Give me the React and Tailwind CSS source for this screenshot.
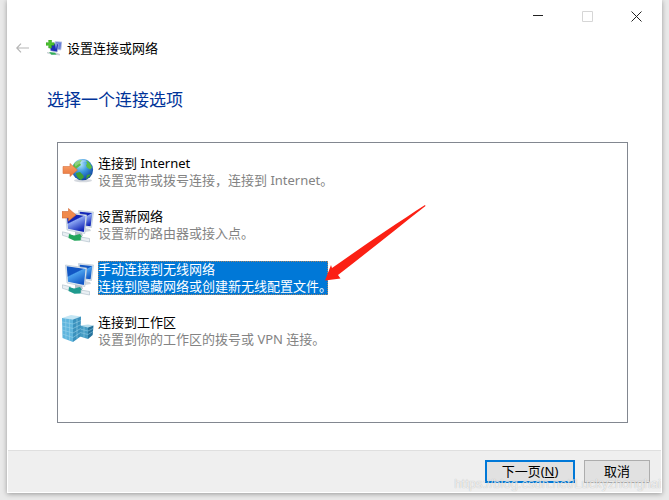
import React, { useState } from "react";

const GlobeIcon = () => (
  <svg viewBox="0 2 32 32" className="w-8 h-8 shrink-0" aria-hidden="true">
    <defs>
      <radialGradient id="sea" cx="0.4" cy="0.25" r="0.8">
        <stop offset="0" stopColor="#b5e6fa" />
        <stop offset="0.45" stopColor="#3b98de" />
        <stop offset="1" stopColor="#0c3796" />
      </radialGradient>
      <linearGradient id="globeArrow" x1="0" y1="0" x2="0" y2="1">
        <stop offset="0" stopColor="#f9a46c" />
        <stop offset="1" stopColor="#e9733a" />
      </linearGradient>
    </defs>
    <ellipse cx="21" cy="26.500" rx="9" ry="1.800" fill="#d5d9df" />
    <circle cx="20.500" cy="15.700" r="10.600" fill="url(#sea)" />
    <path d="M12 10c2-3 5-4 8-4l-2 3 1 2-4 3-3 3-1-1c0-2 0-4 1-6z" fill="#5bbd47" />
    <path d="M14 19l4-1 3 3 1 2-3 3c-3-1-5-4-5-7z" fill="#3fa035" />
    <path d="M24 6.500c3 1 5 4 6 7l-2 2-3-2-1-2 1-2z" fill="#5bbd47" />
    <path d="M25 21l4-1c-1 2-3 4-5 5z" fill="#3fa035" />
    <path d="M12.500 9.500c3-5 10-5 13-2-4 0-9 2-12 5z" fill="#fff" opacity="0.3" />
    <path d="M1 12.500h7V9.500L15.500 16 8 22.500V19.500H1z" fill="url(#globeArrow)" stroke="#d8713c" strokeWidth="0.6" />
  </svg>
);

const ScreensIcon = ({ id, top, bottom, cable, arrow }) => (
  <svg viewBox="0 0 32 36" className="w-8 h-9 shrink-0" aria-hidden="true">
    <defs>
      <linearGradient id={id} x1="0.1" y1="0" x2="0.6" y2="1">
        <stop offset="0" stopColor={bottom} />
        <stop offset="0.4" stopColor={bottom} />
        <stop offset="0.45" stopColor={top} />
        <stop offset="1" stopColor={bottom} />
      </linearGradient>
    </defs>
    <path d="M23 21l5 1 1 2-6 1z" fill="#cfd6dd" />
    <path d="M16.500 3.500L31.500 5 29.500 20.500 18 19z" fill="#dbe5ee" stroke="#b4c3d0" strokeWidth="0.6" />
    <path d="M17.700 4.700L30.300 6 28.600 19.300 18 18z" fill={`url(#${id})`} />
    <path d="M13 24l7 2 1 3-8-1z" fill="#b6c0ca" />
    <path d="M3.500 5l21.300 3-2 18.500L5 23z" fill="#e4ebf2" stroke="#b0bfcd" strokeWidth="0.6" />
    <path d="M4.700 6.300l18.900 2.700-1.700 16L6 21.800z" fill={`url(#${id})`} />
    <path d="M.5 24.800l8 2v4l-8-2.500z" fill="#e9eff3" stroke="#a9bac6" strokeWidth="0.6" />
    <path d="M7 27l5 1.500 6-1.500 2.500 3.500-2 3-6 .2-6-2.700z" fill={cable} />
    <path d="M19 30l8.500 1.500v3.500l-8.500-1.700z" fill="#e9eff3" stroke="#a9bac6" strokeWidth="0.6" />
    {arrow && (
      <path d="M0 4.500h6.500V1.500L14 8 6.500 14V11H0z" fill="#f08a4c" stroke="#d06a35" strokeWidth="0.6" />
    )}
  </svg>
);

const ServersIcon = () => (
  <svg viewBox="0 0 32 32" className="w-8 h-8 shrink-0" aria-hidden="true">
    <path d="M18 10.500l8-1 5.500 1-5.500 2z" fill="#b5dcec" />
    <path d="M18 10.500l8 2V24l-8-2.500z" fill="#469cc4" />
    <path d="M26 12.500l5.500-2-.8 9.500-4.700 4z" fill="#25739c" />
    <path d="M18 14l8 2 5-2.500M18 17.500l8 2 5-3M22 11.500v11" stroke="#8ecae2" strokeWidth="0.6" fill="none" />
    <path d="M0 3l9-3 10 1.500-8 3z" fill="#c4e6f4" />
    <path d="M0 3l11 1.500V27L.5 23z" fill="#5fb5dd" />
    <path d="M11 4.500l8-3-.5 20-7.500 5.500z" fill="#3a91bd" />
    <path d="M0 7l11 2 8-3.500M0 11l11 2.500 8-4M.2 15l10.800 3 7.700-4.500M.4 19l10.600 3.500 7.600-5M3.700 3.500l.3 21M7.400 4l.1 21.500M15 3.500v20" stroke="#a5d8ee" strokeWidth="0.5" fill="none" />
  </svg>
);

const WizardIcon = () => (
  <svg viewBox="0 0 16 16" className="w-4 h-4" aria-hidden="true">
    <path d="M9 1.500l7 .5-1.200 8-5.300-.5z" fill="#6a80d8" stroke="#c6cfe6" strokeWidth="0.8" />
    <path d="M3.500 3l9 1-1.300 8-6.700-1.200z" fill="#1c2fb5" stroke="#b9c5df" strokeWidth="0.6" />
    <path d="M9 4l2 .3-1 5z" fill="#93a4f0" />
    <path d="M1 12l3 .5 6 0 4 1.500v1.500l-4-.5-5-.5-4-1.200z" fill="#c8d0d4" />
    <path d="M3 12l6 .8 1.500 1.800-5 .2z" fill="#2fae58" />
    <path d="M2.700 0h2.800v2.700h2.700v2.600H5.500V8H2.700V5.300H0V2.700h2.700z" fill="#4cc22e" stroke="#2f981d" strokeWidth="0.5" />
  </svg>
);

const options = [
  {
    id: "internet",
    title: "连接到 Internet",
    desc: "设置宽带或拨号连接，连接到 Internet。",
    icon: <GlobeIcon />,
  },
  {
    id: "network",
    title: "设置新网络",
    desc: "设置新的路由器或接入点。",
    icon: <ScreensIcon id="scrA" top="#8ba6f2" bottom="#1226b8" cable="#22a55a" arrow />,
  },
  {
    id: "wireless",
    title: "手动连接到无线网络",
    desc: "连接到隐藏网络或创建新无线配置文件。",
    icon: <ScreensIcon id="scrB" top="#4aa0ee" bottom="#1257c4" cable="#1f9a8e" />,
  },
  {
    id: "workplace",
    title: "连接到工作区",
    desc: "设置到你的工作区的拨号或 VPN 连接。",
    icon: <ServersIcon />,
  },
];

const App = () => {
  const [selected, setSelected] = useState("wireless");

  return (
    <div className="min-h-screen flex bg-[#e9e9e9] px-[7px] pb-[7px] font-['Noto_Sans','Noto_Sans_CJK_SC',sans-serif] text-[13px] leading-[17px] text-black">
      <div className="relative flex-1 flex flex-col bg-white border-x border-b border-white shadow-[0_1px_5px_rgba(0,0,0,0.35)]">
        {/* caption buttons */}
        <div className="flex justify-end h-8">
          <button aria-label="最小化" className="w-[49px] flex items-center justify-center">
            <svg viewBox="0 0 11 11" className="w-[11px] h-[11px]">
              <path d="M0 4.500h10" stroke="#222" />
            </svg>
          </button>
          <button aria-label="最大化" disabled className="w-[49px] flex items-center justify-center">
            <svg viewBox="0 0 11 11" className="w-[11px] h-[11px]">
              <path d="M.5 .5h10v10H.5z" stroke="#d6d6d6" fill="none" />
            </svg>
          </button>
          <button aria-label="关闭" className="w-[49px] flex items-center justify-center">
            <svg viewBox="0 0 11 11" className="w-[11px] h-[11px]">
              <path d="M.5 .5l10 10M10.500 .5l-10 10" stroke="#222" />
            </svg>
          </button>
        </div>

        <div className="flex items-center h-8 pl-2">
          <button aria-label="返回" disabled className="w-[30px]">
            <svg viewBox="0 0 13 10" className="w-[13px] h-[10px]">
              <path d="M5 .7L.8 5 5 9.300M.8 5H13" stroke="#b5b5b5" strokeWidth="1.200" fill="none" />
            </svg>
          </button>
          <WizardIcon />
          <p className="ml-[5px]">设置连接或网络</p>
        </div>

        <h1 className="mt-6 ml-[39px] text-[17px] leading-6 text-[#003399]">选择一个连接选项</h1>

        <ul className="flex-1 flex flex-col gap-[19px] mt-[30px] mb-[27px] ml-[49px] mr-[33px] pt-3 pl-1 border border-[#828790]">
          {options.map((item) => (
            <li key={item.id}>
              <button
                onClick={() => setSelected(item.id)}
                aria-pressed={selected === item.id}
                className="flex items-center gap-1 h-[34px] text-left whitespace-nowrap"
              >
                {item.icon}
                {selected === item.id ? (
                  <span className="relative block w-[230px] bg-[#0078d7] text-white outline-1 -outline-offset-1 outline-dotted outline-[#a08468]">
                    <span className="block">{item.title}</span>
                    <span className="block">{item.desc}</span>
                    <svg
                      viewBox="0 0 102 78"
                      className="absolute left-[226px] -top-[57px] w-[102px] h-[78px]"
                      aria-hidden="true"
                    >
                      <path d="M1 76.500L7 61 8 64 C35 45 70 21 101 1 L101.500 2 C75 23 45 47 14 71 L16.500 74.500z" fill="#fb2014" />
                    </svg>
                  </span>
                ) : (
                  <span className="block">
                    <span className="block">{item.title}</span>
                    <span className="block text-[#838383]">{item.desc}</span>
                  </span>
                )}
              </button>
            </li>
          ))}
        </ul>

        <div className="flex justify-end gap-[9px] h-[42px] pt-[9px] pr-[11px] bg-[#efefef] border-t border-[#dfdfdf]">
          <button className="w-[90px] h-[23px] bg-[#e1e1e1] border-2 border-[#0078d7]">
            下一页(<u>N</u>)
          </button>
          <button className="w-[66px] h-[23px] bg-[#e1e1e1] border border-[#adadad]">取消</button>
        </div>

        <p className="absolute right-0 bottom-0 font-['Liberation_Sans',sans-serif] text-white/75 [text-shadow:0_0_1px_rgba(0,0,0,0.3)] pointer-events-none">
          https://blog.csdn.net/Luckyzhonghai
        </p>
      </div>
    </div>
  );
};

export default App;
